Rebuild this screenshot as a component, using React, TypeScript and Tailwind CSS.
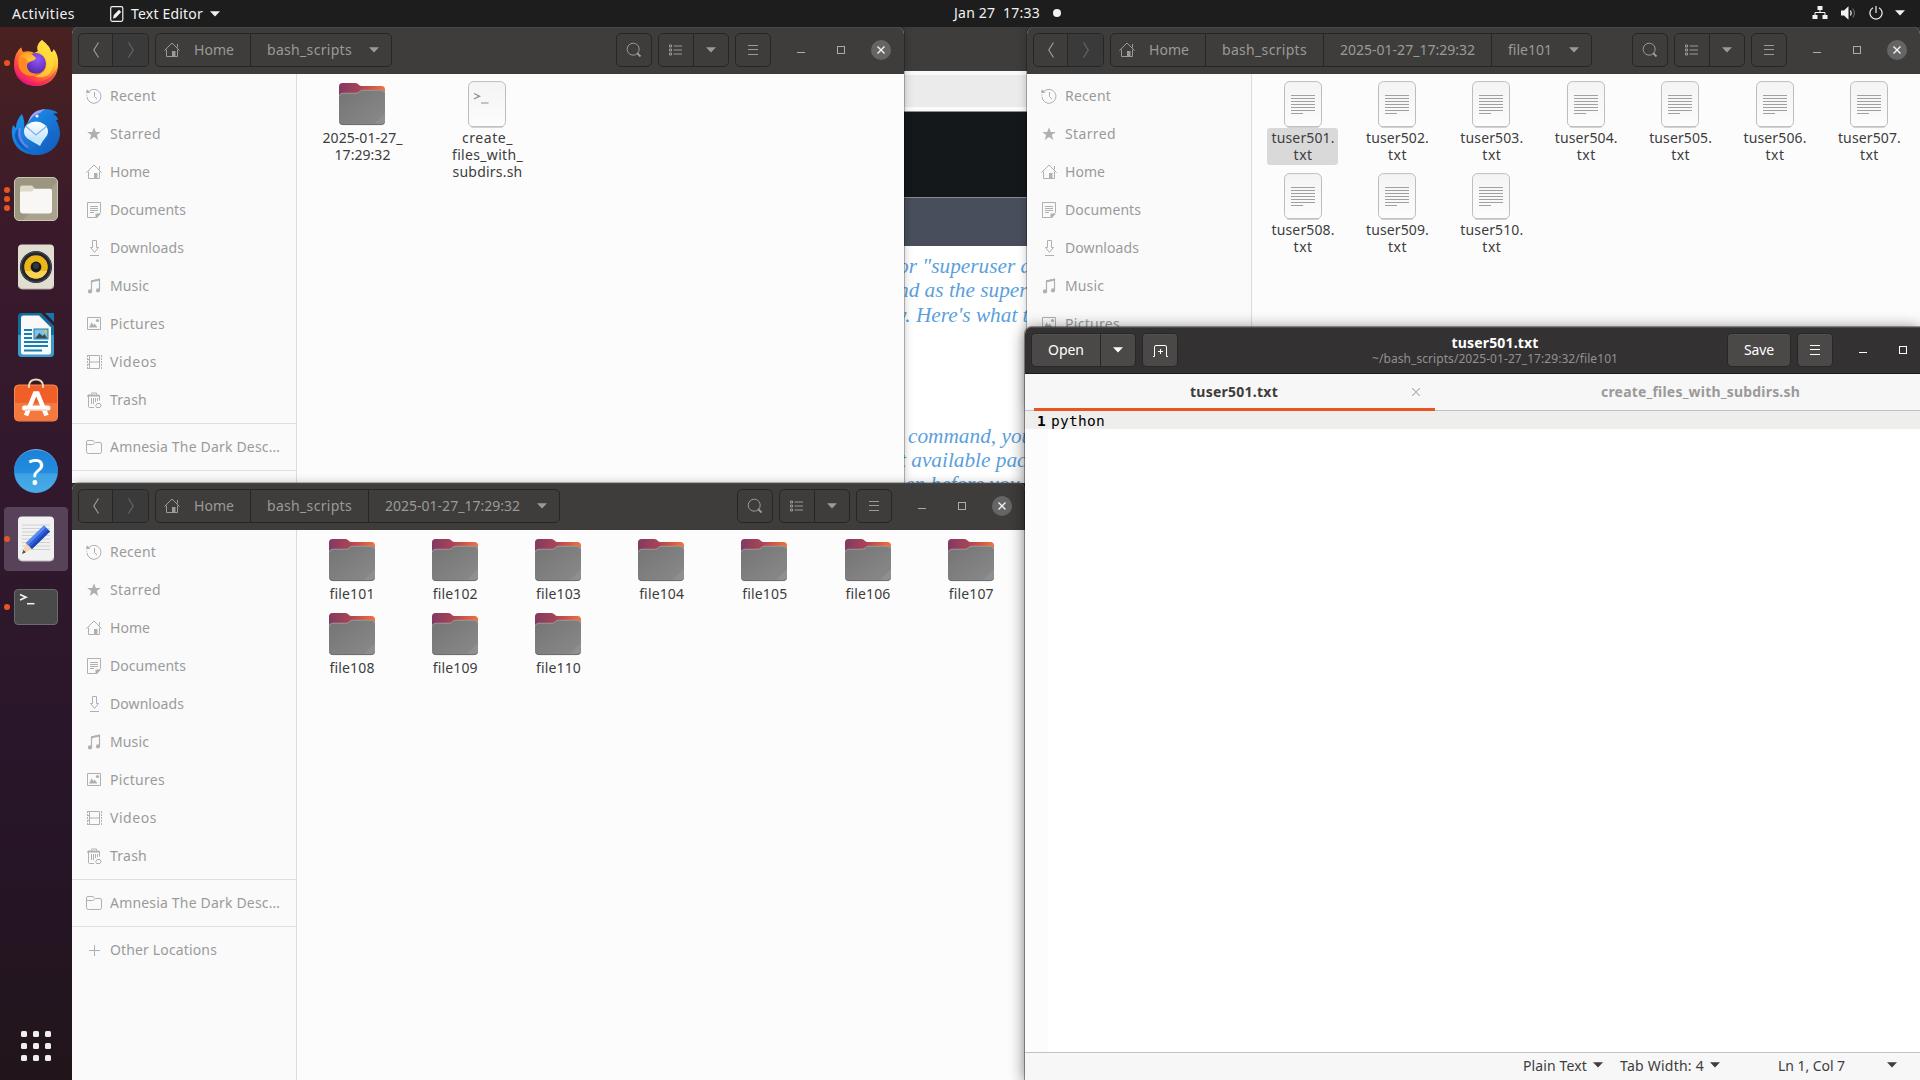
import React, { useLayoutEffect, useRef } from "react";

/* Single-line label whose tracking is adjusted so it spans a given width. */
function Fit({ w, children, className = "" }: { w: number; children: string; className?: string }) {
  const ref = useRef<HTMLSpanElement>(null);
  useLayoutEffect(() => {
    const el = ref.current;
    if (!el) return;
    const apply = () => {
      el.style.letterSpacing = "0px";
      const natural = el.getBoundingClientRect().width;
      const gap = (w - natural) / children.length;
      el.style.letterSpacing = `${gap}px`;
    };
    apply();
    document.fonts.ready.then(apply);
  }, [w, children]);
  return (
    <span ref={ref} className={`inline-block whitespace-pre ${className}`}>
      {children}
    </span>
  );
}

const Caret = ({ className = "" }: { className?: string }) => (
  <svg width="10" height="6" viewBox="0 0 10 6" className={className}>
    <path d="M0 0.3H10L5 5.6Z" fill="currentColor" />
  </svg>
);

/* ---------- symbolic icons ---------- */
const S = ({ children }: { children: React.ReactNode }) => (
  <svg width="16" height="16" viewBox="0 0 16 16" fill="none" stroke="currentColor" className="shrink-0">
    {children}
  </svg>
);

const icons: Record<string, React.ReactNode> = {
  Recent: (
    <S>
      <path d="M3.2 3.2A7 7 0 1 1 1 8.8" />
      <path d="M0.8 7.6V6.6" />
      <path d="M0 3.2L1.2 1.4L4.6 4.4L0.6 5.2Z" fill="currentColor" stroke="none" />
      <path d="M8.5 4V8.5L11 11" />
    </S>
  ),
  Starred: (
    <S>
      <path d="M8 1.2L9.8 6H14.8L10.8 9.1L12.3 14L8 11.1L3.7 14L5.2 9.1L1.2 6H6.2Z" fill="currentColor" stroke="none" />
    </S>
  ),
  Home: <HomeIcon />,
  Documents: (
    <S>
      <path d="M1.5 0.5H14.5V10.5L9.5 15.5H1.5Z" />
      <path d="M4 4.5H12M4 6.5H12M4 8.5H12M4 10.5H8" />
      <path d="M9.5 16V11.5H14.5V12L11 16Z" fill="currentColor" stroke="none" />
    </S>
  ),
  Downloads: (
    <S>
      <path d="M6.5 0.5H10.5V7.5H12.5L8.5 12.5L4.5 7.5H6.5Z" />
      <path d="M4 15.5H13" />
    </S>
  ),
  Music: (
    <S>
      <path d="M5.5 13V3L13.5 1.2V12" strokeWidth="1.2" />
      <path d="M5 4.5L14 2.5V0.6L5 2.4Z" fill="currentColor" stroke="none" />
      <circle cx="4" cy="13.4" r="2.1" fill="currentColor" stroke="none" />
      <circle cx="12" cy="12.4" r="2.1" fill="currentColor" stroke="none" />
    </S>
  ),
  Pictures: (
    <S>
      <path d="M1.5 1.5H14.5V13.5H1.5Z" />
      <path d="M3 11.5L5.6 6.2L7.3 9L8.6 7.6L11.5 11.5Z" fill="currentColor" stroke="none" />
      <circle cx="11.5" cy="4.5" r="1.6" fill="currentColor" stroke="none" />
    </S>
  ),
  Videos: (
    <S>
      <path d="M3.5 1.5H13.5V14.5H3.5ZM3.5 8H13.5" />
      <path d="M1.5 1V15M15.5 1V15" strokeDasharray="2 1" />
      <path d="M1.5 1.5H3M1.5 5.5H3M1.5 10.5H3M1.5 14.5H3" />
    </S>
  ),
  Trash: (
    <S>
      <path d="M5.5 2.5V1H10.5V2.5" />
      <path d="M1 4.5C1 3 2 2.5 3 2.5H12C13 2.5 14 3 14 4.5Z" fill="currentColor" stroke="none" />
      <path d="M2.5 4V14.5Q2.5 15.5 3.5 15.5H8M13.5 4V8.5" />
      <path d="M5.5 6V12M7.5 6V12M9.5 6V10M11.5 6V9" />
      <path d="M11 11.5H14Q16 14 14 15.5H10.5Q8.5 14 11 11.5Z" />
    </S>
  ),
  Folder: (
    <S>
      <path d="M0.5 12.5V3Q0.5 1.5 2 1.5H6Q7.2 1.5 8 2.5Q8.7 3.5 9.6 3.5H14Q15.5 3.5 15.5 5V12.5Q15.5 14.5 13.5 14.5H2.5Q0.5 14.5 0.5 12.5Z" />
      <path d="M0.5 6.5Q0.8 5.5 2 5.5H6.5Q8 5.5 8.7 4.2" />
    </S>
  ),
  Plus: (
    <S>
      <path d="M8.5 3V14M3 8.5H14" />
    </S>
  ),
};

function HomeIcon() {
  return (
    <S>
      <path d="M0.4 8.6L8 1L15.6 8.6" />
      <path d="M2.5 7.5V14.5H13.5V7.5M13.5 2V5.5" />
      <path d="M8 9H11.5V15H8Z" fill="currentColor" stroke="none" />
    </S>
  );
}

/* ---------- file icons ---------- */
const FolderIcon = () => (
  <svg width="48" height="48" viewBox="0 0 48 48" className="shrink-0">
    <defs>
      <linearGradient id="fback" x1="0" x2="1" y1="0" y2="0">
        <stop offset="0" stopColor="#823a62" />
        <stop offset="0.45" stopColor="#a84456" />
        <stop offset="0.7" stopColor="#cf5546" />
        <stop offset="1" stopColor="#f07440" />
      </linearGradient>
      <linearGradient id="ffront" x1="0" x2="1" y1="0" y2="1">
        <stop offset="0" stopColor="#747474" />
        <stop offset="1" stopColor="#8a8a8a" />
      </linearGradient>
    </defs>
    <path d="M1 20V6.5Q1 3 4.5 3H17.5Q19.5 3 20.5 4.6Q21.5 6 23 6H43.5Q47 6 47 9.5V20Z" fill="url(#fback)" />
    <path d="M1 17Q1 13 5 13H18.5Q20 13 21.3 11.6Q22.8 10 24.5 10H43Q47 10 47 14V41Q47 45 43 45H5Q1 45 1 41Z" fill="url(#ffront)" />
    <path d="M1.2 16.5Q1.6 13.2 5 13.2H18.5Q20 13.2 21.3 11.8Q22.8 10.2 24.5 10.2H43Q46.5 10.2 46.8 13.5" fill="none" stroke="#a3a3a3" strokeWidth="0.8" />
    <path d="M47 33V41Q47 45 43 45H35Z" fill="#949494" opacity="0.6" />
    <path d="M1.5 42.5Q2.5 44.6 5 44.6H43Q45.6 44.6 46.5 42.5" fill="none" stroke="#666" strokeWidth="0.8" />
  </svg>
);

const Sheet = ({ children }: { children: React.ReactNode }) => (
  <svg width="48" height="48" viewBox="0 0 48 48" className="shrink-0">
    <defs>
      <linearGradient id="sheet" x1="0" x2="0" y1="0" y2="1">
        <stop offset="0" stopColor="#f4f4f4" />
        <stop offset="1" stopColor="#fcfcfc" />
      </linearGradient>
    </defs>
    <rect x="5.5" y="1.6" width="37" height="45.3" rx="5" fill="url(#sheet)" stroke="#bdbdbd" />
    <path d="M8 46.9H40" stroke="#a9a9a9" strokeWidth="0.8" />
    {children}
  </svg>
);
const TextIcon = () => (
  <Sheet>
    <path d="M12 15.5H36M12 18.5H36M12 21.5H36M12 24.5H36M12 27.5H36M12 30.5H36M12 33.5H24" stroke="#a0a0a0" />
  </Sheet>
);
const ScriptIcon = () => (
  <Sheet>
    <path d="M11 13.5L16.5 16.2L11 19" fill="none" stroke="#8e8e8e" strokeWidth="1.3" />
    <path d="M18 23H25.5" stroke="#8e8e8e" strokeWidth="1.2" />
  </Sheet>
);

/* ---------- file manager window ---------- */
const iconBtn = "flex h-[34px] items-center justify-center border-[#272625]";

function Header({ path }: { path: [string, number][] }) {
  return (
    <div className="flex h-[47px] shrink-0 items-center bg-[#3e3d3b] pl-1.5 pb-px pr-[13px] text-[14px] text-[#9a9a98] shadow-[inset_0_1px_0_#484745]">
      <div className="flex overflow-hidden rounded-[5px] border border-[#272625]">
        <div className="flex h-8 w-[34px] items-center justify-center border-r border-[#272625]">
          <svg width="8" height="16" viewBox="0 0 8 16" fill="none" stroke="currentColor"><path d="M6.5 0.5L1.8 8L6.5 15.5" strokeWidth="1.2" /></svg>
        </div>
        <div className="flex h-8 w-[35px] items-center justify-center bg-[#3a3a3a] text-[#666]">
          <svg width="8" height="16" viewBox="0 0 8 16" fill="none" stroke="currentColor"><path d="M1.5 0.5L6.2 8L1.5 15.5" strokeWidth="1.2" /></svg>
        </div>
      </div>
      <div className="ml-1.5 flex h-[34px] rounded-[5px] border border-[#272625]">
        <div className="flex w-[94px] items-center pl-2">
          <HomeIcon />
          <Fit w={40} className="mb-0.5 ml-3.5">Home</Fit>
        </div>
        {path.map(([name, w], i) => (
          <div key={name} className="flex items-center border-l border-[#272625] px-4">
            <Fit w={w} className="mb-0.5">{name}</Fit>
            {i === path.length - 1 && <Caret className="mr-[-4px] ml-[17px]" />}
          </div>
        ))}
      </div>
      <div className="ml-auto flex items-center">
        <div className={`${iconBtn} w-9 rounded-[5px] border`}>
          <svg width="16" height="16" viewBox="0 0 16 16" fill="none" stroke="currentColor"><circle cx="7.2" cy="7.2" r="6" /><path d="M11 11L14.5 14.5" strokeWidth="1.8" /></svg>
        </div>
        <div className={`${iconBtn} ml-1.5 w-[71px] rounded-[5px] border`}>
          <div className="flex h-full w-[35px] items-center justify-center border-r border-[#272625]">
            <svg width="14" height="12" viewBox="0 0 14 12" fill="none" stroke="currentColor" className="-translate-x-px"><path d="M1.5 1V3H3.5V1ZM1.5 5V7H3.5V5ZM1.5 9V11H3.5V9ZM5.5 2H14M5.5 6H14M5.5 10H14" /></svg>
          </div>
          <div className="flex flex-1 items-center justify-center"><Caret /></div>
        </div>
        <div className={`${iconBtn} ml-1.5 w-9 rounded-[5px] border`}>
          <Burger />
        </div>
        <div className="ml-[26px] mt-1 h-px w-2 bg-[#aaa]" />
        <div className="ml-8 h-2 w-2 border border-[#aaa]" />
        <div className="ml-[26px] flex h-5 w-5 items-center justify-center rounded-full bg-[#656565]">
          <svg width="8" height="8" viewBox="0 0 8 8" stroke="#f4f4f4" strokeWidth="1.4"><path d="M0.5 0.5L7.5 7.5M7.5 0.5L0.5 7.5" /></svg>
        </div>
      </div>
    </div>
  );
}

function Burger() {
  return (
    <svg width="10" height="10" viewBox="0 0 10 10" stroke="currentColor"><path d="M0 0.5H10M0 4.5H10M0 9.5H10" /></svg>
  );
}

const places: [string, number][] = [
  ["Recent", 46], ["Starred", 51], ["Home", 40], ["Documents", 76], ["Downloads", 74],
  ["Music", 39], ["Pictures", 55], ["Videos", 47], ["Trash", 37],
];

const Place = ({ icon, name, w }: { icon: string; name: string; w: number }) => (
  <div className="flex h-[38px] items-center gap-2 pl-3.5">
    <span className="text-[#b0b0b0]">{icons[icon]}</span>
    <Fit w={w} className="mb-0.5">{name}</Fit>
  </div>
);

function Sidebar() {
  return (
    <div className="w-[225px] shrink-0 border-r border-[#dcdcdc] bg-[#fafafa] pt-[3px] text-[14px] text-[#9a9a9a]">
      {places.map(([n, w]) => <Place key={n} icon={n} name={n} w={w} />)}
      <div className="my-1 h-px bg-[#dedede]" />
      <Place icon="Folder" name="Amnesia The Dark Desc…" w={170} />
      <div className="my-1 h-px bg-[#dedede]" />
      <Place icon="Plus" name="Other Locations" w={107} />
    </div>
  );
}

type Item = { icon: React.ReactNode; lines: [string, number][]; selected?: boolean };

const FileCell = ({ icon, lines, selected }: Item) => (
  <div className="flex flex-col items-center">
    {icon}
    <div className={`flex flex-col items-center rounded-[3px] px-1 pt-[1px] pb-0.5 text-[14px] leading-[17px] text-[#3d3d3d] ${selected ? "bg-[#d9d9d9]" : ""}`}>
      {lines.map(([t, w]) => <Fit key={t} w={w} className="translate-x-[0.5px]">{t}</Fit>)}
    </div>
  </div>
);

function FilesWindow({ className, path, grid, items }: { className: string; path: [string, number][]; grid: string; items: Item[] }) {
  return (
    <div className={`absolute flex flex-col overflow-hidden rounded-t-[7px] bg-[#fcfcfc] ${className}`}>
      <Header path={path} />
      <div className="flex min-h-0 flex-1">
        <Sidebar />
        <div className={`grid content-start justify-start pt-1.5 ${grid}`}>
          {items.map((it, i) => <FileCell key={i} {...it} />)}
        </div>
      </div>
    </div>
  );
}

const nums = [1, 2, 3, 4, 5, 6, 7, 8, 9, 10].map((n) => String(n).padStart(2, "0"));

/* ---------- dock ---------- */
const Firefox = () => (
  <svg width="48" height="48" viewBox="0 0 48 48">
    <defs>
      <linearGradient id="ff1" x1="0.85" y1="0.1" x2="0.2" y2="0.95">
        <stop offset="0" stopColor="#fff44f" /><stop offset="0.3" stopColor="#ffc02e" /><stop offset="0.55" stopColor="#ff7b2c" /><stop offset="0.8" stopColor="#ff3a48" /><stop offset="1" stopColor="#e31587" />
      </linearGradient>
      <radialGradient id="ff2" cx="0.6" cy="0.3" r="0.8"><stop offset="0" stopColor="#9059ff" /><stop offset="0.6" stopColor="#6a35c4" /><stop offset="1" stopColor="#3c2aa0" /></radialGradient>
      <linearGradient id="ff3" x1="0" y1="0" x2="1" y2="0.6"><stop offset="0" stopColor="#ff9a1f" /><stop offset="1" stopColor="#ffc83a" /></linearGradient>
    </defs>
    <path d="M30 1C33 4 38 7 39 13C41 13 41.500 11 41.500 10C45 14 46.500 19 46 26C45.500 39 36 47 24 47C11 47 2 38 2 26C2 20 3.500 15 6 12C6.500 10.500 8.500 9 9.500 8.500C9.500 11 10.500 12.500 11.500 13C16 11.500 20 13 22 14L26 12C24.500 8 26 4 30 1Z" fill="url(#ff1)" />
    <path d="M30 1C33 4 38 7 39 13C42 17 43 24 40 31C37 38 28 40 22 37C30 36 35 31 34.500 24C34 18 29 15 26 12C24.500 8 26 4 30 1Z" fill="#ffdd3c" opacity="0.75" />
    <circle cx="23.500" cy="24.500" r="10.500" fill="url(#ff2)" />
    <path d="M7 17C9 13 15 12 19.500 15C22 16.500 21 18.500 24 19.200C23 21 21 22 19 22.500C16 23.500 15 24.500 15 27C15 32 20 35.500 26 34.500C20 40 9 36 7 28C6.300 24 6 20 7 17Z" fill="#ff8a22" />
    <path d="M8 18C10 14 15 12.500 19.500 15.500C22 17 24 18.500 24 19.200C22 21.500 18 22 16 23.500C15 19 11 18 8 18Z" fill="url(#ff3)" />
    <path d="M4 33C9 42 20 46 31 42C38 39 43 34 45 29C44 40 34 47 24 47C15 47 7 42 4 33Z" fill="#e0137c" opacity="0.45" />
  </svg>
);

const Thunderbird = () => (
  <svg width="50" height="48" viewBox="1 0 50 48" className="translate-y-px">
    <defs>
      <linearGradient id="tb1" x1="0" y1="0" x2="1" y2="1"><stop offset="0" stopColor="#1f9bf5" /><stop offset="1" stopColor="#1157b8" /></linearGradient>
      <linearGradient id="tb2" x1="0" y1="0" x2="0" y2="1"><stop offset="0" stopColor="#ffffff" /><stop offset="1" stopColor="#bfe3fb" /></linearGradient>
    </defs>
    <path d="M12 6C14 11 15 15 14 20L19 12C21 5 28 1 36 1.200C41 1.200 46 3 48 5L43 6C47 8 48 10 48 12L46 12C49 17 50 22 50 26C49 39 39 47 26 47C12 47 3 38 2 27C1.500 23 2 20 3 17L6 20C6 14 9 9 12 6Z" fill="url(#tb1)" />
    <path d="M18 15C20 6 27 1 36 1.200C32 2.500 31 4 30 5C25 6 21 10 18 15Z" fill="#ad9bf2" />
    <path d="M8 21C6 31 12 40 22 44C12 42 5 34 5 27C5.500 24 6 22 8 21Z" fill="#0d58bd" />
    <path d="M10 20C8 29 12 36 18 39" fill="none" stroke="#8b7ee8" strokeWidth="1.600" />
    <path d="M39 22C41 30 37 38 27 40C40 40 46 32 45 24Z" fill="#1765c9" opacity="0.7" />
    <ellipse cx="26" cy="23.500" rx="12" ry="10" fill="url(#tb2)" />
    <path d="M17 29C20 33 26 35 30 38C31 36 32 34 35 30Z" fill="#c8e6fa" />
    <path d="M15.500 18L26 27L37 18" fill="none" stroke="#7fb2df" strokeWidth="1.200" />
    <circle cx="27" cy="8" r="1.600" fill="#e8f5ff" />
  </svg>
);

const FilesIcon = () => (
  <svg width="46" height="46" viewBox="0 0 46 46">
    <rect x="1.500" y="1.500" width="43" height="43" rx="4.500" fill="#9d967f" stroke="#cbc6b4" />
    <path d="M44 6V40Q44 44 40 44H10Z" fill="#b0aa95" opacity="0.6" />
    <path d="M7 20V12Q7 9.500 9.500 9.500H18Q19.500 9.500 20.500 11L22 13H36V20Z" fill="#dedac9" />
    <path d="M7 17Q7 15.500 8.500 15.500H19L21.500 12.800H37Q39 12.800 39 15V34.500Q39 37.500 36 37.500H10Q7 37.500 7 34.500Z" fill="#f8f7f5" />
  </svg>
);
const Speaker = () => (
  <svg width="46" height="48" viewBox="0 0 46 48">
    <rect x="5" y="1.500" width="36" height="44.500" rx="4" fill="#e1ddd0" />
    <path d="M5.500 43Q7 46 9 46H37Q40 46 40.500 43" fill="none" stroke="#b3ae9e" />
    <circle cx="23" cy="24" r="16" fill="#23252f" /><circle cx="23" cy="24" r="15.200" fill="none" stroke="#4a4e5c" />
    <circle cx="23" cy="24" r="11.800" fill="#edb617" /><path d="M12 28A11.800 11.800 0 0 0 34 28Z" fill="#f8d355" />
    <circle cx="23" cy="24" r="5.400" fill="#16191d" /><circle cx="23" cy="23" r="3" fill="#33373c" />
  </svg>
);
const Writer = () => (
  <svg width="46" height="48" viewBox="0 0 46 48">
    <path d="M9 2H28L41 15V42Q41 46 37 46H9Q5 46 5 42V6Q5 2 9 2Z" fill="#0f6f9f" />
    <path d="M5 24H41V42Q41 46 37 46H9Q5 46 5 42Z" fill="#3a9ccb" />
    <path d="M32 2H40Q41 2 41 3V11Z" fill="#147aab" />
    <path d="M8 7Q8 4.500 10.500 4.500H26L38 16.500V41Q38 43.500 35.500 43.500H10.500Q8 43.500 8 41Z" fill="#f9f9f9" />
    <path d="M11 19H19M11 23H19M11 27H19M11 31H35M11 35H35M11 39.500H29" stroke="#167eb4" strokeWidth="2" />
    <rect x="21" y="18" width="14" height="10" fill="#7fc3e4" />
    <path d="M22 27.500L26.500 22L29.500 25L31.500 23L34.500 27.500Z" fill="#3d4a4f" /><circle cx="33" cy="20.500" r="1.600" fill="#f3c225" />
    <rect x="21" y="18" width="14" height="10" fill="none" stroke="#167eb4" />
  </svg>
);
const Software = () => (
  <svg width="46" height="50" viewBox="0 0 46 50" className="-translate-y-[3px]">
    <rect x="1.500" y="10" width="43" height="36" rx="4" fill="#f15f28" stroke="#f68a55" />
    <path d="M2 28H44V42Q44 45.500 40.500 45.500H5.500Q2 45.500 2 42Z" fill="#f3793f" />
    <path d="M16 13V10Q17 4.500 23 4.500Q29 4.500 30 10V13" fill="none" stroke="#f2d9ad" strokeWidth="1.800" />
    <path d="M13 40.500L22 18.500H24.500L33.500 40.500" fill="none" stroke="#fff" strokeWidth="4.600" />
    <path d="M11.500 33H35" stroke="#fff" strokeWidth="5" strokeLinecap="round" />
    <path d="M12 35H34" stroke="#f9b998" strokeWidth="1" />
  </svg>
);
const Help = () => (
  <div className="flex h-11 w-11 items-center justify-center rounded-full border-t border-[#6fb6ec] bg-[linear-gradient(#1c81d9_0%,#238ddf_54%,#3da1e4_55%,#49ace8_100%)] font-['Noto_Sans'] text-[36px] leading-none text-white">
    ?
  </div>
);
const EditorIcon = () => (
  <svg width="46" height="48" viewBox="0 0 46 48">
    <rect x="5" y="1.500" width="36" height="44.500" rx="4" fill="#f1f1f1" />
    <path d="M5.500 43Q7 46 9 46H37Q40 46 40.500 43" fill="none" stroke="#bbb" />
    <path d="M9 10H37M9 13.500H37M9 17H37M9 20.500H37M9 24H37M9 27.500H37M9 31H37M9 34.500H37" stroke="#d0d0d0" />
    <path d="M9 39L13 28L19 34Z" fill="#f7d3ae" /><path d="M9 39L10.500 35L12.800 37.200Z" fill="#444" />
    <path d="M13 28L31 10.500L37 16.500L19 34Z" fill="#2f60db" />
    <path d="M13 28L31 10.500L33 12.500L15 30Z" fill="#5a8bf5" /><path d="M17 32L35 14.500L37 16.500L19 34Z" fill="#1c46b4" />
  </svg>
);
const TerminalIcon = () => (
  <svg width="46" height="38" viewBox="0 0 46 38">
    <rect x="1.500" y="1.500" width="43" height="35" rx="3.500" fill="#4a4a4a" stroke="#6b6b6b" />
    <path d="M7 6.500L13 9.200L7 12" fill="none" stroke="#f2f2f2" strokeWidth="1.700" />
    <path d="M14 15.700H21.500" stroke="#f2f2f2" strokeWidth="1.500" />
  </svg>
);

const dock: { el: React.ReactNode; dots: number; active?: boolean }[] = [
  { el: <Firefox />, dots: 1 },
  { el: <Thunderbird />, dots: 0 },
  { el: <FilesIcon />, dots: 3 },
  { el: <Speaker />, dots: 0 },
  { el: <Writer />, dots: 0 },
  { el: <Software />, dots: 0 },
  { el: <Help />, dots: 0 },
  { el: <EditorIcon />, dots: 1, active: true },
  { el: <TerminalIcon />, dots: 1 },
];

function Dock() {
  return (
    <div className="flex w-[72px] shrink-0 flex-col items-center gap-1 bg-[linear-gradient(#4a2120_0%,#391a2b_20%,#31182d_45%,#271528_75%,#21151b_100%)] pt-1">
      {dock.map(({ el, dots, active }, i) => (
        <div key={i} className={`relative flex h-16 w-16 items-center justify-center rounded-[4px] ${active ? "bg-[#57425a]" : ""}`}>
          {el}
          <div className="absolute left-0 flex flex-col gap-[3px]">
            {Array.from({ length: dots }, (_, k) => <span key={k} className="h-1.5 w-1.5 rounded-full bg-[#e95420]" />)}
          </div>
        </div>
      ))}
      <div className="mt-auto mb-[19px] grid grid-cols-3 gap-1.5">
        {Array.from({ length: 9 }, (_, k) => <span key={k} className="h-1.5 w-1.5 rounded-[1.5px] bg-[#efefed]" />)}
      </div>
    </div>
  );
}

/* ---------- top bar ---------- */
function TopBar() {
  return (
    <div className="grid h-[27px] shrink-0 grid-cols-[1fr_auto_1fr] items-center bg-[#1d1d1d] text-[14px] text-[#f2f2f2]">
      <div className="flex items-center pl-3">
        <Fit w={63}>Activities</Fit>
        <svg width="14" height="16" viewBox="0 0 14 16" className="ml-[35px]">
          <rect x="0.700" y="0.700" width="12.100" height="14.600" rx="1.500" fill="none" stroke="#f2f2f2" strokeWidth="1.200" />
          <path d="M3 12.800L3.800 9L9 3.800L11.200 6L6 11.500Z" fill="#f2f2f2" />
        </svg>
        <Fit w={72} className="ml-[7px]">Text Editor</Fit>
        <Caret className="ml-[7px]" />
      </div>
      <div className="flex items-center pb-0.5 pl-[96px]">
        <Fit w={86} className="-translate-x-px">Jan 27  17:33</Fit>
        <span className="ml-3 h-2 w-2 rounded-full bg-[#f2f2f2]" />
      </div>
      <div className="flex items-center justify-end pr-[15px] pb-0.5">
        <svg width="16" height="14" viewBox="0 0 16 14" className="mr-[13px]">
          <path d="M5.500 0H10.500V4H5.500ZM0.500 9H5.500V13H0.500ZM10.500 9H15.500V13H10.500Z" fill="#f2f2f2" />
          <path d="M8 4V6.500M3 9V6.500H13V9" fill="none" stroke="#f2f2f2" />
        </svg>
        <svg width="15" height="14" viewBox="0 0 15 14" fill="none" className="mr-[13px]">
          <path d="M0 4.500H3L7.500 0.300V13.700L3 9.500H0Z" fill="#f2f2f2" />
          <path d="M9.500 4.500Q11 7 9.500 9.500" stroke="#f2f2f2" strokeWidth="1.300" /><path d="M11.800 2.500Q15 7 11.800 11.500" stroke="#777" />
        </svg>
        <svg width="14" height="14" viewBox="0 0 14 14" fill="none" stroke="#f2f2f2" strokeWidth="1.200" className="mr-3">
          <path d="M4 1.700A6.100 6.100 0 1 0 10 1.700M7 0V7" />
        </svg>
        <Caret />
      </div>
    </div>
  );
}

/* ---------- browser strip ---------- */
function Browser() {
  return (
    <div className="absolute top-0 left-[832px] h-[456px] w-[123px] overflow-hidden bg-white">
      <div className="h-11 bg-[#3e3d3b]" />
      <div className="h-10 border-y-4 border-[#fbfafb] bg-[#ebebeb]" />
      <div className="h-px bg-[#8e8e8e]" />
      <div className="h-[85px] bg-[#14181b]" />
      <div className="h-px bg-[#8b8891]" />
      <div className="h-12 bg-[#484e5b]" />
      <div className="flex flex-col items-start pt-2 font-['Liberation_Serif'] text-[21.3px] leading-[24.3px] whitespace-nowrap text-[#5c9fdc] italic">
        <span className="ml-[-6px]">{'or "superuser do"'}</span>
        <span className="ml-[-6px]">nd as the superuser</span>
        <span className="ml-[-7px]">y. Here's what this</span>
        <div className="h-[97px]" />
        <span className="ml-1">command, you</span>
        <span className="ml-[-4px]">t available package</span>
        <span className="ml-px">en before you</span>
      </div>
    </div>
  );
}

/* ---------- text editor ---------- */
const edBtn = "flex h-8 items-center justify-center bg-[#4a4947] shadow-[0_0_0_1px_#282727,inset_0_1px_0_#52514f]";

function Editor() {
  return (
    <div className="absolute top-[300px] left-[953px] flex h-[753px] w-[895px] flex-col overflow-hidden rounded-tl-[7px] bg-white text-[14px] shadow-[0_0_0_1px_rgba(0,0,0,0.35),0_2px_16px_rgba(0,0,0,0.55)]">
      <div className="relative flex h-[47px] shrink-0 items-center border-b border-[#1b1a1a] bg-[#333132] pl-[7px] text-white shadow-[inset_0_1px_0_#4c4a4b]">
        <div className="flex gap-px rounded-[4px]">
          <div className={`${edBtn} w-[68px] rounded-l-[4px]`}><Fit w={36} className="mb-0.5">Open</Fit></div>
          <div className={`${edBtn} w-[34px] rounded-r-[4px]`}><Caret /></div>
        </div>
        <div className={`${edBtn} ml-2 w-[34px] rounded-[4px]`}>
          <svg width="15" height="12" viewBox="0 0 15 12" fill="none" stroke="#fff" className="translate-y-px"><path d="M0 11.500H1.500V2Q1.500 0.500 3 0.500H12Q13.500 0.500 13.500 2V11.500H15M7.500 4V9M5 6.500H10" /></svg>
        </div>
        <div className="flex flex-1 flex-col items-center pt-px pr-[107px] leading-[16px]">
          <Fit w={87} className="font-bold">tuser501.txt</Fit>
          <Fit w={246} className="text-[12px] text-[#929191]">~/bash_scripts/2025-01-27_17:29:32/file101</Fit>
        </div>
        <div className="absolute right-0 flex items-center pr-[13px]">
          <div className={`${edBtn} w-[62px] rounded-[4px]`}><Fit w={30} className="mb-0.5">Save</Fit></div>
          <div className={`${edBtn} ml-2 w-[34px] rounded-[4px]`}><Burger /></div>
          <div className="mt-1 ml-[27px] h-px w-2 bg-white" />
          <div className="ml-8 h-2 w-2 border border-white" />
        </div>
      </div>
      <div className="flex h-[37px] shrink-0 border-b border-[#c3c3c3] bg-[#f7f7f7] pl-[9px]">
        <div className="relative z-10 -mb-px flex w-[401px] items-center border-b-[3px] border-[#e95420] pl-[156px] text-[#3d3d3d]">
          <Fit w={88} className="font-bold">tuser501.txt</Fit>
          <svg width="8" height="8" viewBox="0 0 8 8" stroke="#b5b5b5" strokeWidth="1.200" className="mt-0.5 ml-[134px]"><path d="M0 0L8 8M8 0L0 8" /></svg>
        </div>
        <div className="flex flex-1 items-center pb-0.5 pl-[166px] text-[#9a9a9a]">
          <Fit w={199} className="font-bold">create_files_with_subdirs.sh</Fit>
        </div>
      </div>
      <div className="flex h-[18px] shrink-0 items-center bg-[#eeeeec] pt-0.5 pl-3 font-['DejaVu_Sans_Mono'] text-[14.5px] leading-[18px] text-black">
        <span className="w-[14px] font-bold">1</span>
        <Fit w={54}>python</Fit>
      </div>
      <div className="w-[23px] flex-1 bg-[#fcfcfc]" />
      <div className="flex h-7 shrink-0 items-center border-t border-[#c3c3c3] bg-[#f7f7f7] pr-[23px] pb-[3px] text-[#3d3d3d]">
        <Fit w={64} className="ml-auto">Plain Text</Fit>
        <Caret className="ml-1.5" />
        <Fit w={84} className="ml-[17px]">Tab Width: 4</Fit>
        <Caret className="ml-1.5" />
        <Fit w={67} className="ml-[58px]">Ln 1, Col 7</Fit>
        <Caret className="ml-[42px]" />
      </div>
    </div>
  );
}

export default function App() {
  return (
    <div className="flex h-[1080px] w-[1920px] flex-col overflow-hidden bg-[#1d1d1d] font-['Noto_Sans','Open_Sans',sans-serif]">
      <TopBar />
      <div className="flex min-h-0 flex-1">
        <Dock />
        <div className="relative flex-1 overflow-hidden bg-[#3e3d3b]">
          <Browser />
          <FilesWindow
            className="top-0 left-0 h-[456px] w-[832px] shadow-[0_0_0_1px_rgba(0,0,0,0.25),0_0_10px_rgba(0,0,0,0.25)]"
            path={[["bash_scripts", 85]]}
            grid="grid-cols-[125px_125px] pl-[2.5px]"
            items={[
              { icon: <FolderIcon />, lines: [["2025-01-27_", 80], ["17:29:32", 56]] },
              { icon: <ScriptIcon />, lines: [["create_", 51], ["files_with_", 71], ["subdirs.sh", 70]] },
            ]}
          />
          <FilesWindow
            className="top-0 left-[955px] h-[380px] w-[893px] shadow-[0_0_0_1px_rgba(0,0,0,0.25),0_0_10px_rgba(0,0,0,0.25)]"
            path={[["bash_scripts", 85], ["2025-01-27_17:29:32", 135], ["file101", 44]]}
            grid="auto-rows-[92px] grid-cols-[repeat(7,94.400px)] pl-[3.4px]"
            items={nums.map((n, i) => ({ icon: <TextIcon />, lines: [[`tuser5${n}.`, 63], ["txt", 19]], selected: i === 0 }))}
          />
          <FilesWindow
            className="top-[456px] left-0 h-[597px] w-[953px] shadow-[0_0_0_1px_rgba(0,0,0,0.25),0_0_10px_rgba(0,0,0,0.25)]"
            path={[["bash_scripts", 85], ["2025-01-27_17:29:32", 135]]}
            grid="auto-rows-[74px] grid-cols-[repeat(7,103.200px)] pl-[3px]"
            items={nums.map((n) => ({ icon: <FolderIcon />, lines: [[`file1${n}`, 45]] }))}
          />
          <Editor />
        </div>
      </div>
    </div>
  );
}
